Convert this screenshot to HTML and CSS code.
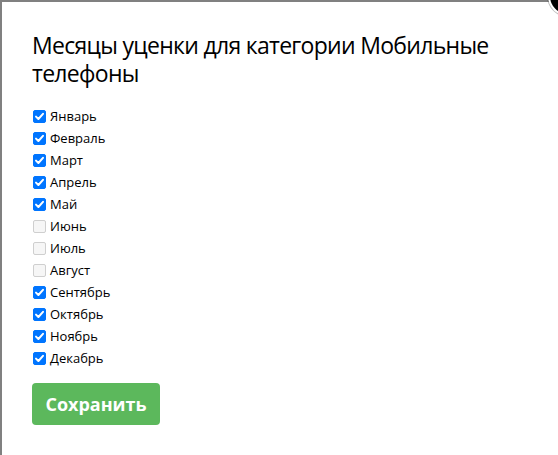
FILE: index.html
```html
<!DOCTYPE html>
<html lang="ru">
<head>
<meta charset="utf-8">
<title>Месяцы уценки</title>
<link rel="stylesheet" href="styles.css">
</head>
<body>
<div class="overlay">
  <div class="modal">
    <h2 class="title">Месяцы уценки для категории Мобильные телефоны</h2>
    <ul class="months">
      <li><label><input type="checkbox" checked> Январь</label></li>
      <li><label><input type="checkbox" checked> Февраль</label></li>
      <li><label><input type="checkbox" checked> Март</label></li>
      <li><label><input type="checkbox" checked> Апрель</label></li>
      <li><label><input type="checkbox" checked> Май</label></li>
      <li><label><input type="checkbox"> Июнь</label></li>
      <li><label><input type="checkbox"> Июль</label></li>
      <li><label><input type="checkbox"> Август</label></li>
      <li><label><input type="checkbox" checked> Сентябрь</label></li>
      <li><label><input type="checkbox" checked> Октябрь</label></li>
      <li><label><input type="checkbox" checked> Ноябрь</label></li>
      <li><label><input type="checkbox" checked> Декабрь</label></li>
    </ul>
    <button class="btn-save" type="button">Сохранить</button>
  </div>
  <svg class="close-btn" width="16" height="20" viewBox="0 0 16 20" aria-label="Закрыть">
    <circle cx="26" cy="-4" r="21" fill="rgba(0,0,0,0.25)"/>
    <circle cx="26" cy="-4" r="20" fill="#fff"/>
    <circle cx="26" cy="-4" r="18" fill="#000"/>
  </svg>
</div>
</body>
</html>
```

FILE: styles.css
```css
html, body {
  margin: 0;
  padding: 0;
  height: 100%;
  overflow: hidden;
}
body {
  background: #808080;
  font-family: "Open Sans", "DejaVu Sans", sans-serif;
  color: #000;
}
.overlay {
  position: relative;
  padding: 2px 0 0 2px;
  height: 100%;
  box-sizing: border-box;
}
.modal {
  background: #fff;
  height: 100%;
  box-sizing: border-box;
  padding: 29px 30px 0 30px;
}
.title {
  margin: 0 0 18px 0;
  font-weight: normal;
  font-size: 23px;
  line-height: 28px;
  letter-spacing: -0.7px;
}
.months {
  list-style: none;
  margin: 0;
  padding: 0;
}
.months li {
  height: 22px;
  display: flex;
  align-items: center;
}
.months label {
  display: flex;
  align-items: center;
  gap: 4px;
  font-size: 13px;
}
.months input {
  appearance: none;
  -webkit-appearance: none;
  width: 13px;
  height: 13px;
  margin: 0 0 0 1px;
  box-sizing: border-box;
  border: 1px solid #cfcfcf;
  border-radius: 2px;
  background: #f6f6f6;
}
.months input:checked {
  border-color: #0075ff;
  background-color: #0075ff;
  background-image: url("data:image/svg+xml,%3Csvg xmlns='http://www.w3.org/2000/svg' viewBox='0 0 13 13'%3E%3Cpath d='M3 6.6 L5.4 9 L10 3.8' fill='none' stroke='white' stroke-width='2' stroke-linecap='round' stroke-linejoin='round'/%3E%3C/svg%3E");
  background-size: 13px 13px;
  background-position: -1px -1px;
}
.btn-save {
  margin-top: 14px;
  width: 128px;
  height: 42px;
  border: none;
  border-radius: 4px;
  background: #5cb85c;
  color: #fff;
  font-family: "Open Sans", "DejaVu Sans", sans-serif;
  font-weight: bold;
  font-size: 18px;
  padding: 0;
}
.close-btn {
  position: absolute;
  z-index: 10;
  right: 0;
  top: 0;
  display: block;
}
```
